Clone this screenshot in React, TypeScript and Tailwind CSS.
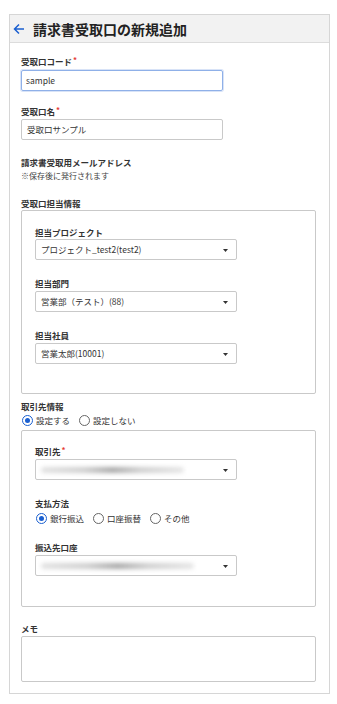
import React from "react";

const font = { fontFamily: '"Noto Sans CJK JP", "Noto Sans", sans-serif' };

const Req = () => <span className="text-[#e53935] ml-[1px] relative -top-[2px] text-[8px]">*</span>;

const Label: React.FC<{ children: React.ReactNode; className?: string; required?: boolean }> = ({
  children,
  className = "",
  required = false,
}) => (
  <div className={`text-[8.5px] leading-[14px] font-bold text-[#333] ${className}`}>
    {children}
    {required && <Req />}
  </div>
);

const Caret = () => (
  <svg width="5" height="3" viewBox="0 0 5 3" className="absolute right-[8px] top-[9px]">
    <path d="M0 0h5L2.5 3z" fill="#333" />
  </svg>
);

const Select: React.FC<{ value?: string; blurWidth?: number; className?: string }> = ({
  value,
  blurWidth,
  className = "",
}) => (
  <div
    className={`relative w-[202px] h-[21px] border border-[#c9c9c9] rounded-[2px] bg-white flex items-center pl-[5px] text-[8.5px] text-[#333] ${className}`}
  >
    {value}
    {blurWidth && (
      <div
        className="h-[6px] rounded-full blur-[2px] bg-[linear-gradient(90deg,#e2e2e2_0%,#cfcfcf_30%,#a9a9a9_50%,#cfcfcf_70%,#e6e6e6_100%)]"
        style={{ width: blurWidth }}
      />
    )}
    <Caret />
  </div>
);

const Radio: React.FC<{ checked?: boolean; label: string }> = ({ checked = false, label }) => (
  <div className="flex items-center gap-[3px]">
    <span
      className={`w-[11px] h-[11px] rounded-full border-[1.5px] flex items-center justify-center ${
        checked ? "border-[#1a5fd0]" : "border-[#666]"
      }`}
    >
      {checked && <span className="w-[5px] h-[5px] rounded-full bg-[#1a5fd0]" />}
    </span>
    <span className="text-[8.5px] text-[#333]">{label}</span>
  </div>
);

export default function App() {
  return (
    <div className="w-[337px] h-[704px] bg-white pt-[14px] pl-[9px]" style={font}>
      <div className="w-[321px] border border-[#d6d6d6] bg-white">
        <div className="h-[28px] bg-[#f2f2f2] border-b border-[#dcdcdc] flex items-center pl-[3px]">
          <svg width="12" height="12" viewBox="0 0 12 12" className="mr-[8px]">
            <path d="M11 6H2M6 1.5L1.5 6 6 10.5" stroke="#1a5fd0" strokeWidth="1.5" fill="none" />
          </svg>
          <span className="text-[14px] font-bold text-[#222] leading-none">請求書受取口の新規追加</span>
        </div>

        <div className="pl-[11px] pr-[13px] pt-[11px] pb-[11px]">
          <Label required>受取口コード</Label>
          <div className="mt-[1px] w-[202px] h-[21px] border border-[#8fb0e8] rounded-[2px] flex items-center pl-[4px] text-[8.5px] text-[#333] shadow-[0_0_0_1px_rgba(143,176,232,0.35)]">
            sample
          </div>

          <Label required className="mt-[13px]">受取口名</Label>
          <div className="w-[202px] h-[21px] border border-[#c9c9c9] rounded-[2px] flex items-center pl-[5px] text-[8.5px] text-[#333]">
            受取口サンプル
          </div>

          <Label className="mt-[15px] leading-[13px]">請求書受取用メールアドレス</Label>
          <div className="text-[8px] leading-[13px] text-[#444]">※保存後に発行されます</div>

          <Label className="mt-[14px]">受取口担当情報</Label>
          <div className="border border-[#c9c9c9] rounded-[2px] pl-[13px] pt-[14px] pb-[29px]">
            <Label>担当プロジェクト</Label>
            <Select value="プロジェクト_test2(test2)" />
            <Label className="mt-[16px]">担当部門</Label>
            <Select value="営業部（テスト）(88)" className="mt-[1px]" />
            <Label className="mt-[16px]">担当社員</Label>
            <Select value="営業太郎(10001)" className="mt-[1px]" />
          </div>

          <Label className="mt-[5px]">取引先情報</Label>
          <div className="flex items-center gap-[9px] h-[14px] pl-[1px]">
            <Radio checked label="設定する" />
            <Radio label="設定しない" />
          </div>
          <div className="mt-[3px] border border-[#c9c9c9] rounded-[2px] pl-[13px] pt-[13px] pb-[30px]">
            <Label required>取引先</Label>
            <Select blurWidth={143} />
            <Label className="mt-[16px]">支払方法</Label>
            <div className="mt-[1px] flex items-center gap-[9px] h-[14px] pl-[1px]">
              <Radio checked label="銀行振込" />
              <Radio label="口座振替" />
              <Radio label="その他" />
            </div>
            <Label className="mt-[15px]">振込先口座</Label>
            <Select blurWidth={153} className="mt-[1px]" />
          </div>

          <Label className="mt-[14px]">メモ</Label>
          <div className="mt-[1px] h-[46px] border border-[#c9c9c9] rounded-[2px]" />
        </div>
      </div>
    </div>
  );
}
